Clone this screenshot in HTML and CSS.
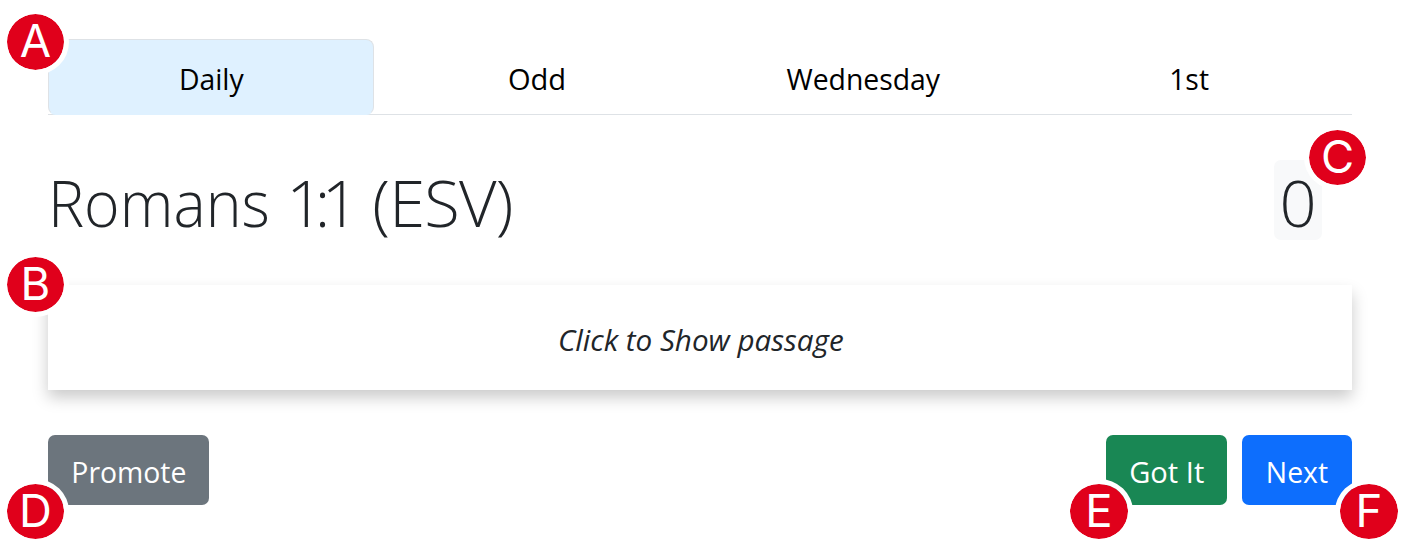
FILE: index.html
```html
<!DOCTYPE html>
<html lang="en">
<head>
<meta charset="utf-8">
<title>Romans 1:1</title>
<link rel="stylesheet" href="styles.css">
</head>
<body>
<main class="page">
  <nav class="tabs">
    <a class="tab active"><span class="label">Daily</span></a>
    <a class="tab"><span class="label odd">Odd</span></a>
    <a class="tab"><span class="label">Wednesday</span></a>
    <a class="tab"><span class="label">1st</span></a>
    <span class="marker marker-a">A</span>
  </nav>
  <header class="heading">
    <h1 class="title"><span class="book">Romans</span> <span class="verse">1:1</span> <span class="version">(ESV)</span></h1>
    <div class="count"><span class="digit">0</span><span class="marker marker-c">C</span></div>
  </header>
  <section class="passage"><span class="hint">Click to Show passage</span><span class="marker marker-b">B</span></section>
  <div class="actions">
    <button class="btn promote"><span class="label">Promote</span><span class="marker marker-d">D</span></button>
    <button class="btn got-it"><span class="label odd">Got It</span><span class="marker marker-e">E</span></button>
    <button class="btn next"><span class="label">Next</span><span class="marker marker-f">F</span></button>
  </div>
</main>
</body>
</html>
```
FILE: styles.css
```css
* { box-sizing: border-box; }
body { margin: 0; background: #fff; color: #212529; font-family: "Open Sans", "Noto Sans", sans-serif; font-size: 30px; overflow: hidden; }
.page { width: 1403px; height: 559px; padding: 39px 51px 0 48px; }
.tabs { position: relative; display: grid; grid-template-columns: repeat(4, 1fr); height: 76px; border-bottom: 1px solid #dee2e6; }
.tab { display: flex; align-items: center; justify-content: center; height: 76px; padding-top: 3px; color: #000; border: 1px solid transparent; }
.tab.active { background: #dff1ff; border-color: #dee2e6; border-bottom-color: #dff1ff; border-radius: 8px; }
.label, .hint, .digit { display: inline-block; white-space: nowrap; }
.label { transform: scaleX(.945); }
.label.odd { transform: scaleX(.97); }
.hint { transform: scaleX(.987); }
.heading { display: flex; justify-content: space-between; height: 80px; margin-top: 45px; padding-right: 30px; }
.title { margin: 0; font-size: 65px; line-height: 84px; font-weight: 300; white-space: nowrap; }
.book { display: inline-block; margin-right: -16px; transform: scaleX(.935); transform-origin: left; }
.verse { margin-right: 5px; letter-spacing: -8.5px; }
.version { letter-spacing: -.75px; }
.count { position: relative; display: flex; justify-content: center; width: 48px; height: 80px; border-radius: 7px; background: #f8f9fa; font-size: 65px; line-height: 84px; font-weight: 300; }
.passage { position: relative; display: flex; align-items: center; justify-content: center; height: 105px; margin-top: 45px; padding-top: 3px; box-shadow: 0 7.5px 15px rgba(0,0,0,.21); font-style: italic; }
.hint { margin-left: 1px; }
.actions { display: flex; gap: 15px; margin-top: 45px; }
.btn { position: relative; display: flex; align-items: center; justify-content: center; height: 70px; padding: 2px 0 0; border: 0; border-radius: 7px; color: #fff; font: inherit; }
.promote { width: 161px; margin-right: auto; background: #6c757d; }
.got-it { width: 121px; background: #198754; }
.next { width: 110px; background: #0d6efd; }
.marker { position: absolute; z-index: 1; width: 67px; height: 65px; border: 5px solid #fff; border-radius: 50%; background: #e0001b; background-clip: padding-box; color: #fff; font: 400 45.5px/53px Inter, "Liberation Sans", sans-serif; text-align: center; }
.marker-a { left: -46px; top: -30px; height: 66px; line-height: 54px; }
.marker-b { left: -46px; top: -33px; }
.marker-c { left: 30px; top: -35px; }
.marker-d { left: -46px; top: 44px; }
.marker-e { left: -41px; top: 44px; width: 68px; }
.marker-f { left: 93px; top: 44px; width: 68px; }
```
